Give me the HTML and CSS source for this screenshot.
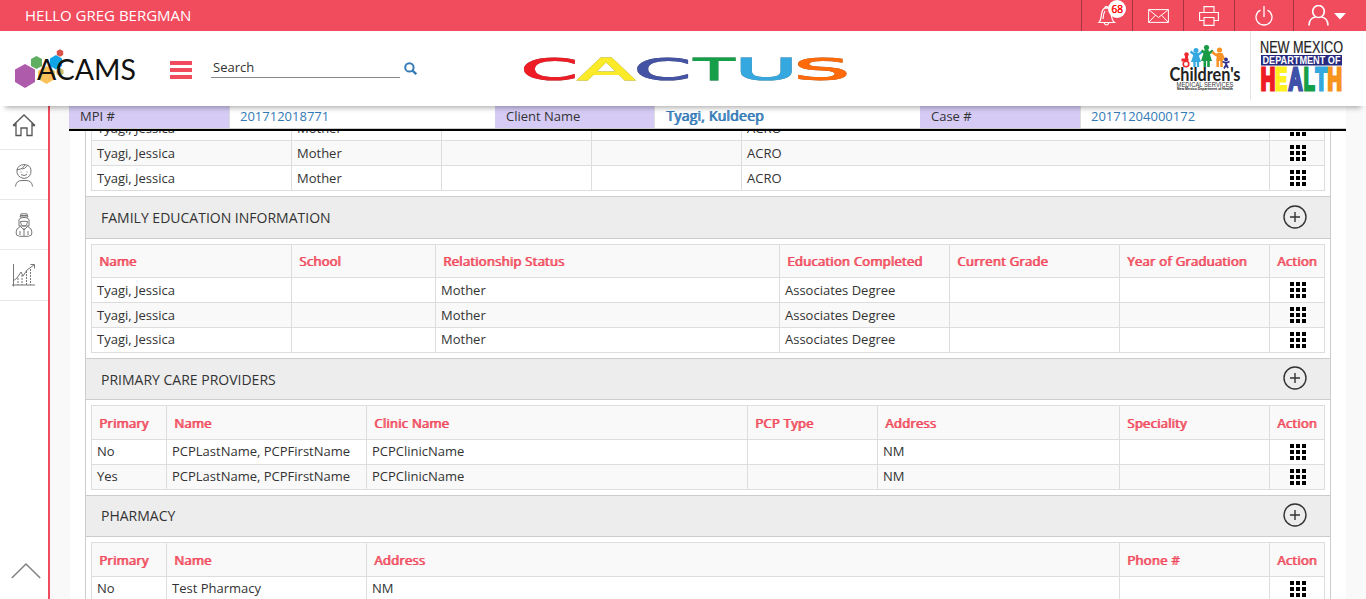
FILE: index.html
```html
<!DOCTYPE html>
<html lang="en">
<head>
<meta charset="utf-8">
<title>CACTUS</title>
<link rel="stylesheet" href="styles.css">
</head>
<body>
<svg width="0" height="0" class="defs">
  <symbol id="grid" viewBox="0 0 16 16"><path d="M0 0h4v4H0zM6 0h4v4H6zM12 0h4v4h-4zM0 6h4v4H0zM6 6h4v4H6zM12 6h4v4h-4zM0 12h4v4H0zM6 12h4v4H6zM12 12h4v4h-4z"/></symbol>
  <symbol id="plus" viewBox="0 0 24 24"><g fill="none" stroke="#333" stroke-width="1.4"><circle cx="12" cy="12" r="11"/><path d="M7 12h10M12 7v10"/></g></symbol>
</svg>
<div class="topbar">
  <div class="hello">HELLO GREG BERGMAN</div>
  <div class="tools">
    <div class="tool bell"><svg width="20" height="22" viewBox="0 0 20 22"><g fill="none" stroke="#fff" stroke-width="1.2"><path d="M2 17.500C5 15 3.500 7 6.500 4Q8 2.800 9.500 2.800Q13 3 14 7C15 12 14 15 17.500 17.500zM7.500 2.800Q9.500 0 11.200 2.800M7 18Q9.500 22 12 18M6 14C6.500 10 6.500 8 8 6"/></g></svg><span class="badge">68</span></div>
    <div class="tool mail"><svg width="21" height="14" viewBox="0 0 21 14"><path d="M.6.600h19.800v12.800H.600zM.6.600 10.500 8.500 20.400.600M.6 13.400 7.500 6.200M20.400 13.400 13.500 6.200" fill="none" stroke="#fff" stroke-width="1"/></svg></div>
    <div class="tool print"><svg width="20" height="20" viewBox="0 0 20 20"><path d="M5 6V.600h10V6M5 14.500H.600V6.500h18.800v8H15M5 11.500h10v7.900H5z" fill="none" stroke="#fff" stroke-width="1.100"/></svg></div>
    <div class="tool power"><svg width="18" height="20" viewBox="0 0 18 20"><path d="M5.500 4.200a8 7.800 0 1 0 7 0M9 0v11" fill="none" stroke="#fff" stroke-width="1.300"/></svg></div>
    <div class="tool user"><svg width="38" height="21" viewBox="0 0 38 21"><ellipse cx="10.500" cy="6.500" rx="5.800" ry="6" fill="none" stroke="#fff" stroke-width="1.700"/><path d="M1 20.500c0-5 3-8 6.500-8.500M20 20.500c0-5-3-8-6.500-8.500" fill="none" stroke="#fff" stroke-width="1.700"/><path d="M26 8h12l-6 6.500z" fill="#fff"/></svg></div>
  </div>
</div>
<header class="header">
  <svg class="acams" width="124" height="42" viewBox="0 0 124 42">
    <path fill="#ae5bac" d="M11 15 21 20.500V33L11 39 1 33V20.500z"/>
    <path fill="#5fae61" d="M22.500 7 28 10v7l-5.500 3-5.500-3v-7z"/>
    <path fill="#fbc25c" d="M32.500 17 41 22v8l-8.500 5-8.500-5v-8z"/>
    <path fill="#c9b968" d="M46 19l3.500 2v4L46 27l-3.500-2v-4z"/>
    <path fill="#10a5e8" d="M42 6 48 9.500V17L42 20.500 36 17V9.500z"/>
    <path fill="#d8524c" d="M46 .200 49.200 2v4L46 7.800 42.800 6V2z"/>
    <text x="23" y="31.300" textLength="99" lengthAdjust="spacingAndGlyphs" class="acams-text">ACAMS</text>
  </svg>
  <div class="menu"><i></i><i></i><i></i></div>
  <div class="search">Search</div>
  <svg class="glass" width="13" height="13" viewBox="0 0 13 13"><circle cx="5.400" cy="5.400" r="4.200" fill="none" stroke="#337ab7" stroke-width="2"/><path d="M8.500 8.500l3.700 3.700" stroke="#337ab7" stroke-width="2.300"/></svg>
  <svg class="cactus" width="330" height="36" viewBox="520 51 330 36">
    <g class="cactus-text">
      <text x="520.500" y="80" textLength="57.600" lengthAdjust="spacingAndGlyphs" fill="#ee1c25" stroke="#ee1c25">C</text>
      <text x="577.500" y="80" textLength="57.400" lengthAdjust="spacingAndGlyphs" fill="#fbea28" stroke="#fbea28">A</text>
      <text x="633.700" y="80" textLength="57.600" lengthAdjust="spacingAndGlyphs" fill="#4553a5" stroke="#4553a5">C</text>
      <text x="693.800" y="80" textLength="40.700" lengthAdjust="spacingAndGlyphs" fill="#169f49" stroke="#169f49">T</text>
      <text x="734.500" y="80" textLength="63.500" lengthAdjust="spacingAndGlyphs" fill="#35a8e0" stroke="#35a8e0">U</text>
      <text x="793.200" y="80" textLength="57" lengthAdjust="spacingAndGlyphs" fill="#ff6a0a" stroke="#ff6a0a">S</text>
    </g>
  </svg>
  <svg class="children" width="74" height="48" viewBox="1168 43 74 48">
    <g fill="#ee2a30" stroke="#ee2a30"><circle cx="1186.500" cy="54.500" r="2.200" stroke="none"/><path d="M1186.500 56v7M1181.500 60h7" fill="none" stroke-width="3"/><circle cx="1186" cy="64" r="2.800" fill="#fff" stroke-width="1.600"/></g>
    <g fill="#35a8e0" stroke="#35a8e0"><circle cx="1196" cy="50.500" r="2.500" stroke="none"/><path d="M1194 53h4l3 9h-10z" stroke="none"/><path d="M1190.500 51.500l4 3h4l4-3M1194.500 61v6M1198 61v6" fill="none" stroke-width="2.300"/></g>
    <g fill="#199b46" stroke="#199b46"><circle cx="1206.500" cy="47.500" r="2.600" stroke="none"/><path d="M1204.500 50h4l3.500 11h-11z" stroke="none"/><path d="M1201.500 50.500l4 3h3.500l4-3M1204.800 60v7M1208.500 60v7" fill="none" stroke-width="2.600"/></g>
    <g fill="#f79226" stroke="#f79226"><circle cx="1219.500" cy="50" r="2.600" stroke="none"/><path d="M1216.500 53h6v8h-6z" stroke="none"/><path d="M1212 52l4 3h6l2 4.500M1217.700 59v8M1221.500 59v8" fill="none" stroke-width="2.500"/></g>
    <g fill="#33348e" stroke="#33348e"><circle cx="1226" cy="59.500" r="1.900" stroke="none"/><path d="M1222.500 61.500l3.500 1.500 3.500-1.500M1226 62v3l-2 3.500M1226 64l2 4" fill="none" stroke-width="1.800"/></g>
    <text x="1169.500" y="80.500" textLength="71" lengthAdjust="spacingAndGlyphs" class="kids">Children's</text>
    <text x="1176.500" y="86.500" textLength="57" lengthAdjust="spacingAndGlyphs" class="kids-mid">MEDICAL SERVICES</text>
    <text x="1177" y="90" textLength="56" lengthAdjust="spacingAndGlyphs" class="kids-low">New Mexico Department of Health</text>
  </svg>
  <svg class="nmdoh" width="93" height="70" viewBox="1250 31 93 70">
    <path d="M1250.500 31v69.500" stroke="#e5e5e5"/>
    <text x="1260" y="53" textLength="83" lengthAdjust="spacingAndGlyphs" class="nm">NEW MEXICO</text>
    <path d="M1261 55h81v10.500h-81z" fill="#262a7e"/>
    <text x="1262.500" y="64" textLength="78" lengthAdjust="spacingAndGlyphs" class="dep">DEPARTMENT OF</text>
    <g class="health">
      <text x="1260.800" y="90.300" textLength="14.500" lengthAdjust="spacingAndGlyphs" fill="#ee1c25" stroke="#ee1c25">H</text>
      <text x="1275.300" y="90.300" textLength="12" lengthAdjust="spacingAndGlyphs" fill="#fff01f" stroke="#fff01f">E</text>
      <text x="1288.500" y="90.300" textLength="14" lengthAdjust="spacingAndGlyphs" fill="#3f51a8" stroke="#3f51a8">A</text>
      <text x="1303.800" y="90.300" textLength="11" lengthAdjust="spacingAndGlyphs" fill="#169f49" stroke="#169f49">L</text>
      <text x="1315.500" y="90.300" textLength="11.500" lengthAdjust="spacingAndGlyphs" fill="#35a8e0" stroke="#35a8e0">T</text>
      <text x="1327.500" y="90.300" textLength="14.500" lengthAdjust="spacingAndGlyphs" fill="#f7941e" stroke="#f7941e">H</text>
    </g>
  </svg>
</header>
<div class="body">
  <nav class="side">
    <div class="side-item"><svg width="24" height="24" viewBox="0 0 24 24"><path d="M1 12.500 12 2l11 10.500M4 10v12.500h5V15h6v7.500h5V10M1 12.500h3M20 12.500h3" fill="none" stroke="#555" stroke-width="1.300"/></svg></div>
    <div class="side-item"><svg width="24" height="24" viewBox="0 0 24 24"><g fill="none" stroke="#777"><path d="M5 6.500Q4 14 12 15.500 19.500 14.500 19 7M5 7Q6 2 12 1.500 18.500 2 19 7M5 7Q11 6.500 13 2M10 6Q13 6 15 3M9 11.500Q12 13.500 15 11.500M9 8.500v1M15 8.500v1M3.500 23.500Q4 17.500 10 17.500h4Q20 17.500 20.500 23.500"/></g></svg></div>
    <div class="side-item"><svg width="24" height="24" viewBox="0 0 24 24"><g fill="none" stroke="#777"><path d="M8 4 9 .800h6L16 4M8 4h8M9 2.500h6M7 9Q6 4.500 12 4.500T17 9v4H7zM8.500 8.500Q12 8 15.500 8.500 15 13 12 13T8.500 8.500M9 13l-4 3q-1.500 3-.5 6l3 1.300h9l3-1.300q1-3-.5-6l-4-3M12 15v8M8 18v4M16 18v4M9 14l3 3 3-3"/></g></svg></div>
    <div class="side-item"><svg width="24" height="24" viewBox="0 0 24 24"><g fill="none" stroke="#777"><path d="M1.500 1v22.500M0 22h23"/><path d="M1 18l4-3 4-6 2 4 4-6 7-5M18.500 1.500h4v4"/><path stroke-dasharray="2 1" d="M6 15v7M10 12v10M14.500 8v14M18.500 6v16"/></g></svg></div>
    <svg class="up" width="30" height="17" viewBox="0 0 30 17"><path d="M.8 16 15 2l14.200 14" fill="none" stroke="#808080" stroke-width="1.500"/></svg>
  </nav>
  <main class="main">
    <div class="client">
      <div class="label">MPI #</div><div class="value">201712018771</div>
      <div class="label">Client Name</div><div class="value name">Tyagi, Kuldeep</div>
      <div class="label">Case #</div><div class="value">20171204000172</div>
    </div>
    <div class="scroll">
      <div class="panel">
        <div class="table family">
          <div class="row"><div>Tyagi, Jessica</div><div>Mother</div><div></div><div></div><div>ACRO</div><div><svg><use href="#grid"/></svg></div></div>
          <div class="row alt"><div>Tyagi, Jessica</div><div>Mother</div><div></div><div></div><div>ACRO</div><div><svg><use href="#grid"/></svg></div></div>
          <div class="row"><div>Tyagi, Jessica</div><div>Mother</div><div></div><div></div><div>ACRO</div><div><svg><use href="#grid"/></svg></div></div>
        </div>
        <div class="heading tall"><span>FAMILY EDUCATION INFORMATION</span><svg><use href="#plus"/></svg></div>
        <div class="table education">
          <div class="row head short"><div>Name</div><div>School</div><div>Relationship Status</div><div>Education Completed</div><div>Current Grade</div><div>Year of Graduation</div><div>Action</div></div>
          <div class="row"><div>Tyagi, Jessica</div><div></div><div>Mother</div><div>Associates Degree</div><div></div><div></div><div><svg><use href="#grid"/></svg></div></div>
          <div class="row alt"><div>Tyagi, Jessica</div><div></div><div>Mother</div><div>Associates Degree</div><div></div><div></div><div><svg><use href="#grid"/></svg></div></div>
          <div class="row last"><div>Tyagi, Jessica</div><div></div><div>Mother</div><div>Associates Degree</div><div></div><div></div><div><svg><use href="#grid"/></svg></div></div>
        </div>
        <div class="heading providers"><span>PRIMARY CARE PROVIDERS</span><svg><use href="#plus"/></svg></div>
        <div class="table pcp">
          <div class="row head"><div>Primary</div><div>Name</div><div>Clinic Name</div><div>PCP Type</div><div>Address</div><div>Speciality</div><div>Action</div></div>
          <div class="row last"><div>No</div><div>PCPLastName, PCPFirstName</div><div>PCPClinicName</div><div></div><div>NM</div><div></div><div><svg><use href="#grid"/></svg></div></div>
          <div class="row alt last"><div>Yes</div><div>PCPLastName, PCPFirstName</div><div>PCPClinicName</div><div></div><div>NM</div><div></div><div><svg><use href="#grid"/></svg></div></div>
        </div>
        <div class="heading"><span>PHARMACY</span><svg><use href="#plus"/></svg></div>
        <div class="table pharmacy">
          <div class="row head"><div>Primary</div><div>Name</div><div>Address</div><div>Phone #</div><div>Action</div></div>
          <div class="row last"><div>No</div><div>Test Pharmacy</div><div>NM</div><div></div><div><svg><use href="#grid"/></svg></div></div>
        </div>
      </div>
    </div>
  </main>
</div>
</body>
</html>
```
FILE: styles.css
```css
* { box-sizing: border-box; }
body { margin: 0; height: 599px; overflow: hidden; display: flex; flex-direction: column; background: #f9f9f9; color: #333; font: 13px/18px "Open Sans", sans-serif; }
svg { display: block; flex: none; }
.defs { position: absolute; }
.topbar { height: 31px; flex: none; display: flex; justify-content: space-between; background: #f14b5e; color: #fff; }
.hello { padding: 5px 0 0 25px; font-size: 15px; line-height: 20px; }
.tools { display: flex; }
.tool { width: 51px; border-left: 1px solid #a8343f; display: flex; justify-content: center; align-items: center; }
.bell { position: relative; }
.badge { position: absolute; left: 26px; top: 0; width: 18px; height: 18px; border-radius: 50%; background: #fff; color: #f00; font-size: 10px; line-height: 19px; text-align: center; text-shadow: .4px 0 #f00; }
.power { width: 59px; }
.user { width: 73px; padding-right: 6px; }
.header { height: 75px; flex: none; display: flex; align-items: flex-start; background: #fff; box-shadow: 0 7px 5px -5px rgba(0,0,0,.3); position: relative; z-index: 2; }
.acams { margin: 18px 0 0 14px; }
.acams-text { font: 28px Lato, sans-serif; fill: #111; }
.menu { width: 22px; margin: 30px 0 0 32px; display: grid; gap: 3px; }
.menu i { height: 4px; background: #f14b5e; }
.search { width: 189px; height: 21px; margin: 26px 0 0 19px; padding-left: 2px; line-height: 21px; border-bottom: 1px solid #888; }
.glass { margin: 31px 0 0 4px; }
.cactus { margin: 20px 0 0 103px; }
.cactus-text { font: 31px "DejaVu Sans", sans-serif; }
.cactus-text text { stroke-width: .9px; filter: drop-shadow(0 0 .6px #777); }
.children { margin: 12px 0 0 318px; }
.kids { font: bold 18px Lato, sans-serif; fill: #222; }
.kids-mid { font: 7px "Liberation Sans", sans-serif; fill: #333; }
.kids-low { font: bold 4px "Liberation Sans", sans-serif; fill: #111; }
.nmdoh { margin-left: 8px; }
.nm { font: 16px "Liberation Sans", sans-serif; fill: #222; stroke: #222; stroke-width: .2px; }
.dep { font: bold 11px "Liberation Sans", sans-serif; fill: #fff; }
.health { font: bold 32px "Liberation Sans", sans-serif; stroke-width: 3px; }
.body { flex: 1; min-height: 0; display: flex; }
.side { width: 50px; flex: none; border-right: 2px solid #f14b5e; background: #fff; display: flex; flex-direction: column; }
.side-item { height: 50px; flex: none; border-bottom: 1px solid #e8e8e8; display: flex; justify-content: center; align-items: center; }
.side-item:first-child { height: 44px; padding-bottom: 6px; }
.side-item:nth-child(4) { height: 51px; }
.up { margin: auto 0 20px 11px; }
.main { flex: 1; min-width: 0; margin: 0 20px 0 19px; display: flex; flex-direction: column; }
.client { height: 25px; flex: none; display: grid; grid-template-columns: 161px 265px 160px 265px 161px 1fr; border-bottom: 2px solid #000; background: #fff; }
.client div { padding-left: 11px; line-height: 20px; border-bottom: 1px solid #ccc; }
.client .label { background: #d5cbf5; border-right: 1px solid #ddd; }
.client .value { padding-left: 10px; color: #337ab7; }
.client .name { padding-left: 11px; font-size: 14px; letter-spacing: .22px; text-shadow: 1px 0 #337ab7; }
.scroll { flex: 1; min-height: 0; overflow: hidden; margin-left: 1px; padding: 0 15px; background: #fff; }
.panel { margin-top: -22px; border-left: 1px solid #ccc; border-right: 1px solid #ccc; height: 600px; }
.table { margin: 5px; border-right: 1px solid #ddd; border-bottom: 1px solid #ddd; }
.panel .table:first-child { margin-top: 6px; }
.row { display: grid; height: 25px; border-top: 1px solid #ddd; }
.family .row { grid-template-columns: 200px 150px 150px 150px 528px 55px; }
.education .row { grid-template-columns: 200px 144px 344px 170px 170px 150px 55px; }
.pcp .row { grid-template-columns: 75px 200px 381px 130px 242px 150px 55px; }
.pharmacy .row { grid-template-columns: 75px 200px 753px 150px 55px; }
.row > div { padding: 3px 0 0 5px; border-left: 1px solid #ddd; white-space: nowrap; }
.row.last > div { padding-top: 2px; }
.row.alt { background: #f9f9f9; }
.row svg { width: 16px; height: 16px; margin: 1px 0 0 15px; }
.row.last svg { margin-top: 2px; }
.row.head { height: 34px; background: #f9f9f9; color: #f14b5e; letter-spacing: .27px; text-shadow: 1px 0 #f14b5e; }
.row.head > div { padding: 8px 0 0 7px; }
.row.head.short { height: 33px; }
.row.head.short > div { padding-top: 7px; }
.heading { height: 42px; border-top: 1px solid #ccc; border-bottom: 1px solid #ccc; background: #ededed; padding: 0 23px 0 15px; font-size: 14px; display: flex; justify-content: space-between; align-items: center; }
.heading.tall { height: 43px; }
.heading.providers span { padding-top: 2px; }
.heading svg { width: 24px; height: 24px; margin-bottom: 2px; }
```
